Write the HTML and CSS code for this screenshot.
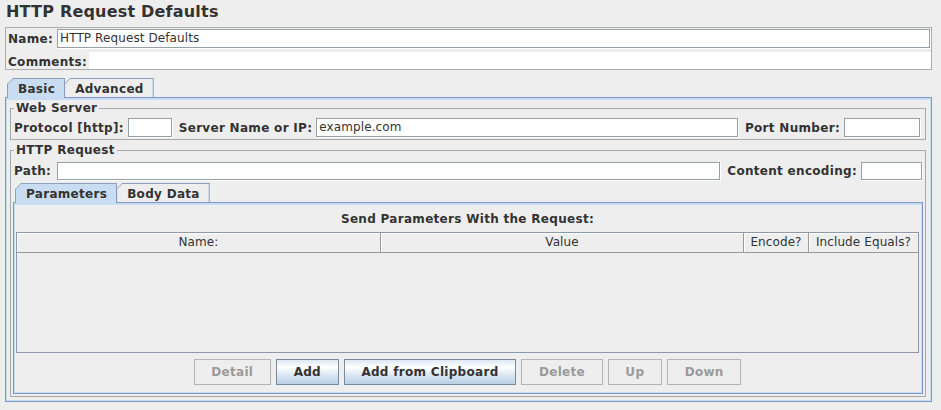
FILE: index.html
```html
<!DOCTYPE html>
<html>
<head>
<meta charset="utf-8">
<title>HTTP Request Defaults</title>
<link rel="stylesheet" href="styles.css">
</head>
<body>
<div class="page">
  <h1 class="title">HTTP Request Defaults</h1>
  <div class="namebox">
    <div class="nrow">
      <span class="lbl">Name:</span>
      <div class="field grow">HTTP Request Defaults</div>
    </div>
    <div class="nrow crow">
      <span class="lbl">Comments:</span>
      <div class="cfield grow"></div>
    </div>
  </div>

  <div class="tabpane outer">
    <div class="tabs">
      <div class="tab sel"><span>Basic</span></div>
      <div class="tab"><span>Advanced</span></div>
    </div>
    <div class="tabcontent">
      <fieldset class="group web">
        <legend>Web Server</legend>
        <div class="row">
          <span class="lbl">Protocol [http]:</span>
          <div class="field w-proto"></div>
          <span class="lbl">Server Name or IP:</span>
          <div class="field grow">example.com</div>
          <span class="lbl">Port Number:</span>
          <div class="field w-port"></div>
        </div>
      </fieldset>

      <fieldset class="group req">
        <legend>HTTP Request</legend>
        <div class="row">
          <span class="lbl lbl-path">Path:</span>
          <div class="field grow"></div>
          <span class="lbl">Content encoding:</span>
          <div class="field w-enc"></div>
        </div>

        <div class="tabpane inner">
          <div class="tabs">
            <div class="tab sel"><span>Parameters</span></div>
            <div class="tab"><span>Body Data</span></div>
          </div>
          <div class="tabcontent innercontent">
            <div class="heading">Send Parameters With the Request:</div>
            <div class="scroll">
              <div class="thead">
                <div class="th">Name:</div>
                <div class="th">Value</div>
                <div class="th">Encode?</div>
                <div class="th last">Include Equals?</div>
              </div>
            </div>
            <div class="buttons">
              <button class="btn off" disabled>Detail</button>
              <button class="btn">Add</button>
              <button class="btn">Add from Clipboard</button>
              <button class="btn off" disabled>Delete</button>
              <button class="btn off" disabled>Up</button>
              <button class="btn off" disabled>Down</button>
            </div>
          </div>
        </div>
      </fieldset>
    </div>
  </div>
</div>
</body>
</html>
```

FILE: styles.css
```css
* { box-sizing: border-box; }

body {
  margin: 0;
  background: #eeeeee;
  font-family: "DejaVu Sans", "Noto Sans", sans-serif;
  font-size: 12px;
  letter-spacing: 0.1px;
  color: #333333;
}

.page {
  width: 941px;
  height: 410px;
  overflow: hidden;
}

.title {
  margin: 0;
  height: 27px;
  padding: 2px 0 0 6px;
  font-size: 16px;
  line-height: 19px;
  font-weight: bold;
  letter-spacing: 0.2px;
  color: #333333;
}

.lbl {
  font-weight: bold;
  letter-spacing: 0.3px;
  white-space: nowrap;
  margin-right: 4px;
}

.field {
  background: #ffffff;
  border: 1px solid #96a0aa;
  box-shadow: 1px 1px 0 #ffffff;
  height: 19px;
  line-height: 17px;
  padding: 0 2px;
  white-space: nowrap;
  overflow: hidden;
}

.field + .lbl { margin-left: 7px; }

.grow { flex: 1 1 auto; min-width: 0; }

/* Name / comments */
.namebox {
  margin-left: 5px;
  width: 927px;
  height: 43px;
  border: 1px solid #acacac;
  padding: 0 0 0 2px;
}

.nrow {
  display: flex;
  align-items: center;
  height: 21px;
  padding-right: 1px;
}

.nrow .lbl { margin-right: 4px; }

.crow {
  height: 20px;
  padding-right: 0;
  align-items: flex-end;
}

.crow .lbl {
  margin-right: 2px;
  line-height: 14px;
}

.cfield {
  background: #ffffff;
  height: 17px;
}

/* Tabbed panes */
.outer {
  margin: 8px 0 0 5px;
  width: 927px;
}

.tabs {
  display: flex;
  align-items: flex-end;
  height: 19px;
  padding-left: 2px;
  position: relative;
  z-index: 1;
}

.tab {
  height: 19px;
  margin-right: -1px;
  padding: 1px 1px 0 1px;
  background: #8c9fbc;
  clip-path: polygon(0 6px, 6px 0, 100% 0, 100% 100%, 0 100%);
}

.tab span {
  display: block;
  height: 100%;
  padding: 2px 9px 0 10px;
  line-height: 16px;
  font-weight: bold;
  letter-spacing: 0.3px;
  white-space: nowrap;
  background: #eeeeee;
  clip-path: polygon(0 5px, 5px 0, 100% 0, 100% 100%, 0 100%);
}

.tab.sel {
  height: 20px;
  margin-bottom: -1px;
}

.tab.sel span { background: #c8ddf2; }

.tabcontent {
  height: 305px;
  border: 1px solid #7d98c6;
  box-shadow: inset 1px 2px 0 #c8ddf2, inset -1px -1px 0 #c8ddf2;
  padding: 0 5px 0 4px;
}

/* Titled groups */
.group {
  margin: 3px 0 0 0;
  padding: 0 2px 2px 2px;
  border: 1px solid #a9a9a9;
  min-width: 0;
}

.group legend {
  margin-left: 1px;
  padding: 0 2px;
  font-weight: bold;
  letter-spacing: 0.3px;
  line-height: 14px;
}

.row {
  display: flex;
  align-items: center;
  padding-left: 1px;
}

.web .row {
  margin-top: 3px;
  height: 19px;
  padding-right: 3px;
}

.req .row {
  margin-top: 5px;
  height: 18px;
  padding-right: 1px;
}

.req .row .field { height: 18px; line-height: 16px; }

.lbl-path { margin-right: 6px; }

.w-proto { width: 44px; }
.w-port { width: 76px; }
.w-enc { width: 61px; }

/* Inner tabbed pane */
.inner { margin-top: 3px; }

.innercontent {
  height: 192px;
  padding: 9px 3px 0 2px;
}

.heading {
  text-align: center;
  font-weight: bold;
  letter-spacing: 0.3px;
  line-height: 14px;
  margin-bottom: 6px;
}

.scroll {
  height: 121px;
  border: 1px solid #8d99aa;
}

.thead {
  display: grid;
  grid-template-columns: 364px 363px 65px 1fr;
  height: 20px;
}

.th {
  text-align: center;
  line-height: 18px;
  border-right: 1px solid #9a9a9a;
  border-bottom: 1px solid #9a9a9a;
  box-shadow: inset 1px 1px 0 #ffffff;
  white-space: nowrap;
  overflow: hidden;
}

.th.last { border-right: none; }

.buttons {
  display: flex;
  justify-content: center;
  gap: 5px;
  margin-top: 6px;
}

.btn {
  height: 26px;
  margin: 0;
  padding: 0 16.7px;
  border: 1px solid #7a8a99;
  border-radius: 0;
  font-family: "DejaVu Sans", "Noto Sans", sans-serif;
  font-size: 12px;
  font-weight: bold;
  letter-spacing: 0.3px;
  color: #333333;
  background: linear-gradient(#dde8f3 0%, #ffffff 30%, #dde8f3 60%, #b8cfe5 100%);
}

.btn.off {
  border-color: #b4b4b4;
  background: #eeeeee;
  color: #9a9a9a;
}
```
